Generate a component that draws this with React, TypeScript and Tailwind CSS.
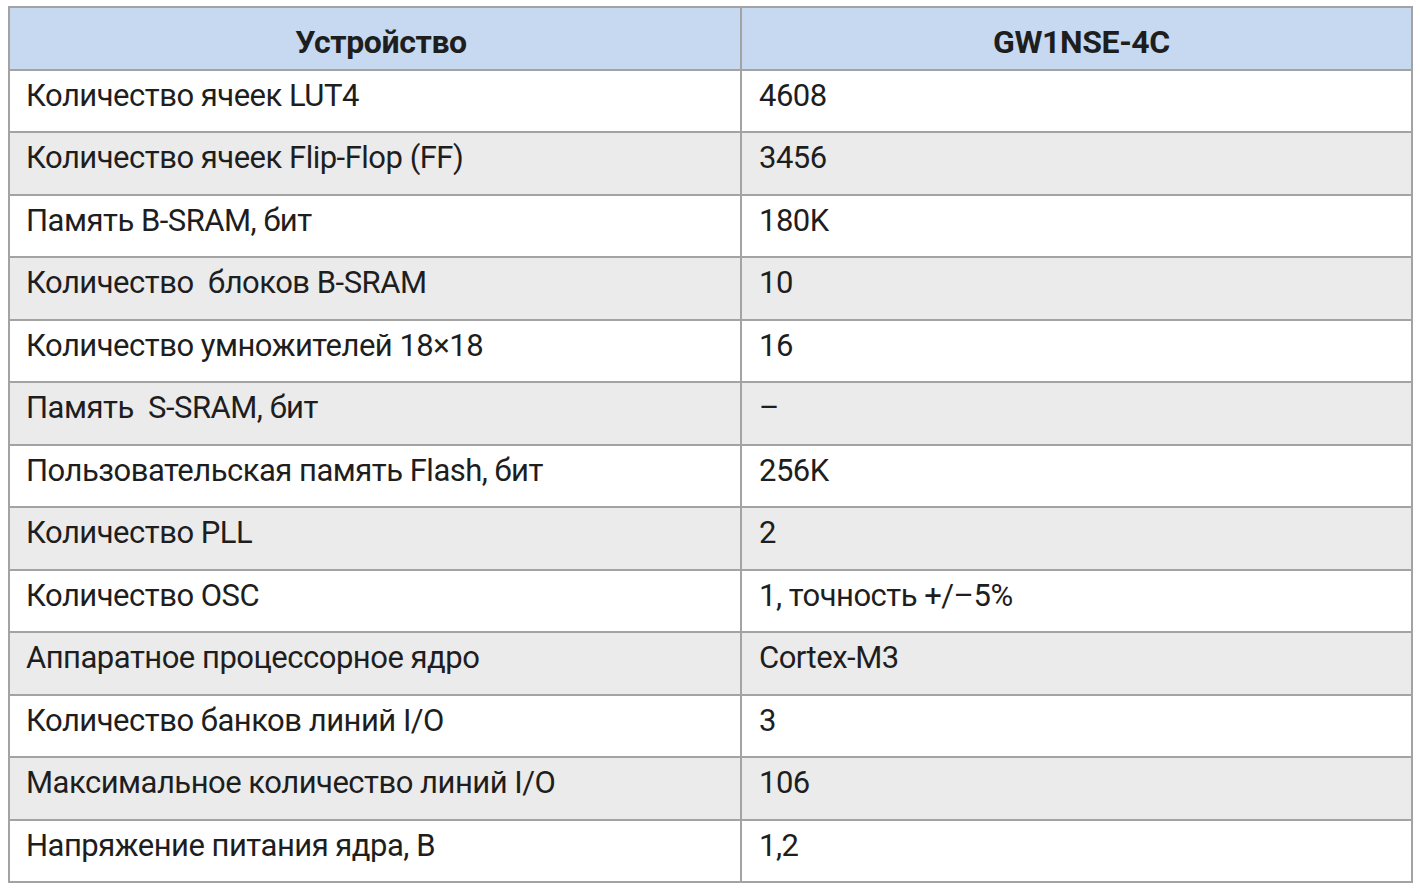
const rows: [string, string][] = [
  ['Количество ячеек LUT4', '4608'],
  ['Количество ячеек Flip-Flop (FF)', '3456'],
  ['Память B-SRAM, бит', '180K'],
  ['Количество\u00a0 блоков B-SRAM', '10'],
  ['Количество умножителей 18×18', '16'],
  ['Память\u00a0 S-SRAM, бит', '–'],
  ['Пользовательская память Flash, бит', '256K'],
  ['Количество PLL', '2'],
  ['Количество OSC', '1, точность +/–5%'],
  ['Аппаратное процессорное ядро', 'Cortex-M3'],
  ['Количество банков линий I/O', '3'],
  ['Максимальное количество линий I/O', '106'],
  ['Напряжение питания ядра, В', '1,2'],
];

export default function App() {
  return (
    <div className="w-[1420px] h-[890px] bg-white pt-[6px] pl-[8px]" style={{ fontFamily: 'Roboto, "Open Sans", sans-serif' }}>
      <div className="w-[1405px] h-[877px] flex flex-col border-2 border-[#a3a3a3] text-[#1e1e1e]">
        <div className="flex-1 flex bg-[#c6d9f0] border-b-2 border-[#a3a3a3] font-bold text-[32px] tracking-[-0.4px]">
          <div className="w-[732px] border-r-2 border-[#a3a3a3] flex items-center justify-center pl-[12px] pt-[7px]">Устройство</div>
          <div className="flex-1 flex items-center justify-center pl-[10px] pt-[7px]">GW1NSE-4C</div>
        </div>
        {rows.map(([name, value], i) => (
          <div
            key={i}
            className={`flex-1 flex text-[31px] tracking-[-0.5px] ${i % 2 === 1 ? 'bg-[#ebebeb]' : 'bg-white'} ${i < rows.length - 1 ? 'border-b-2 border-[#a3a3a3]' : ''}`}
          >
            <div className="w-[732px] border-r-2 border-[#a3a3a3] flex items-center pl-[16px] pb-[10px]">{name}</div>
            <div className="flex-1 flex items-center pl-[17px] pb-[10px]">{value}</div>
          </div>
        ))}
      </div>
    </div>
  );
}
